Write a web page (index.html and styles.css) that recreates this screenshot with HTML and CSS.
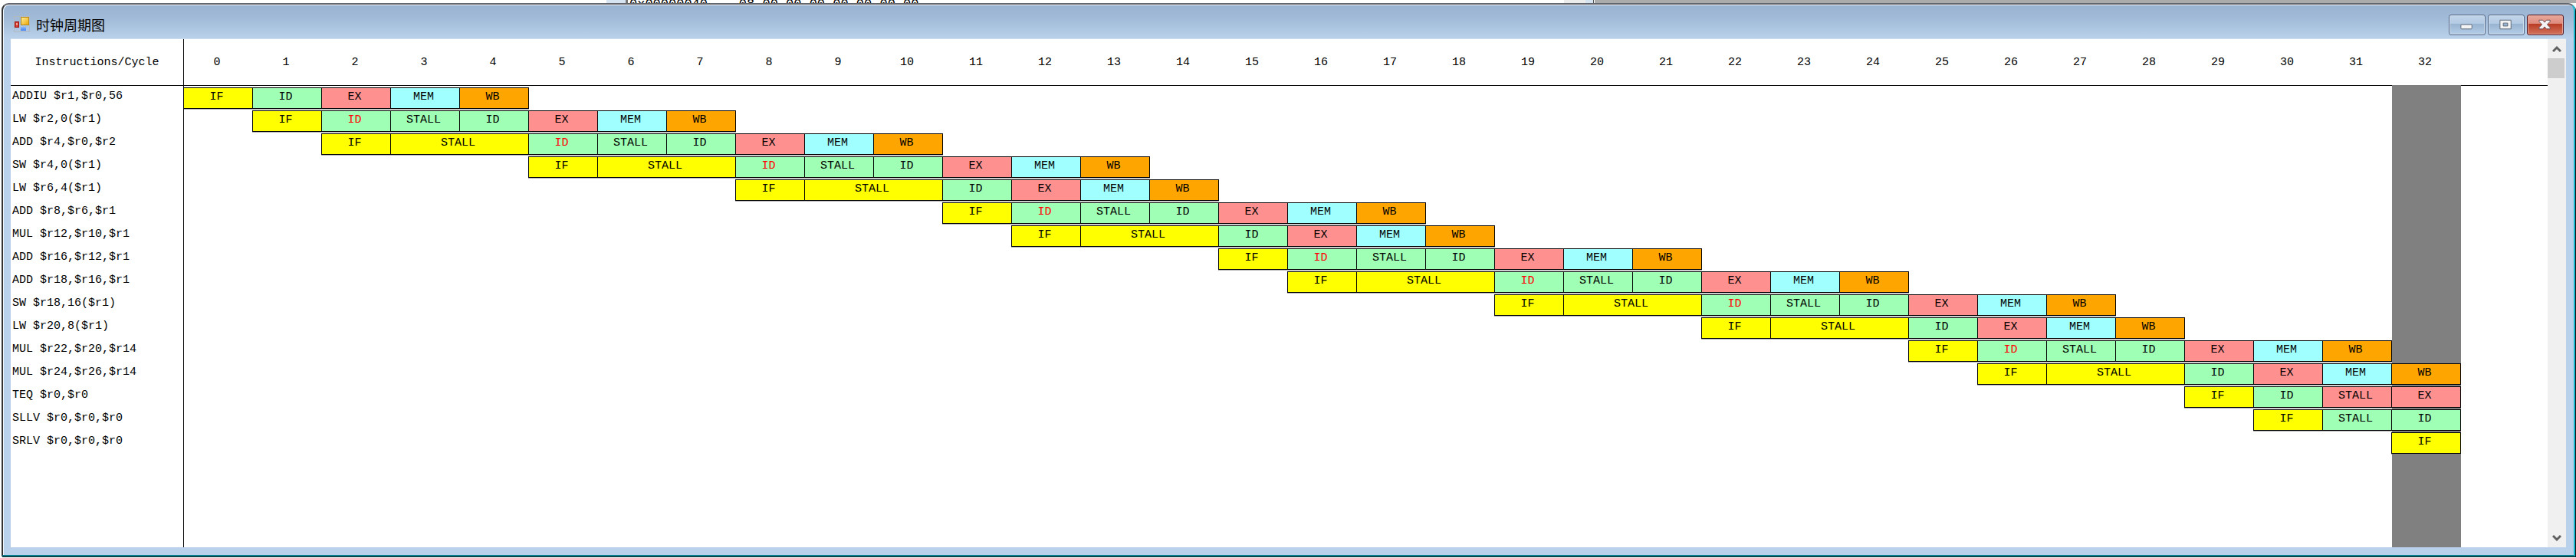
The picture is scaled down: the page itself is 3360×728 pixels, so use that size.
FILE: index.html
```html
<!DOCTYPE html>
<html lang="zh-CN">
<head>
<meta charset="utf-8">
<title>时钟周期图</title>
<link rel="stylesheet" href="styles.css">
</head>
<body>
<div class="backdrop" aria-hidden="true">
  <div class="memory"><span class="gutter"></span><span class="dump">0x00000040&nbsp;&nbsp;&nbsp;&nbsp;08 00 00 00 00 00 00 00</span><span class="memory-bar"></span></div>
</div>
<main class="window">
  <header class="titlebar">
    <svg class="app-icon" viewBox="0 0 22 22" aria-hidden="true">
      <defs>
        <linearGradient id="gold" x1="0" y1="0" x2="1" y2="1"><stop offset="0" stop-color="#fff0a0"/><stop offset="1" stop-color="#eda500"/></linearGradient>
        <linearGradient id="blue" x1="0" y1="0" x2="0" y2="1"><stop offset="0" stop-color="#8db9ff"/><stop offset="1" stop-color="#3f7ff0"/></linearGradient>
      </defs>
      <rect x=".5" y=".5" width="20" height="20" fill="none" stroke="#b3b9c1"/>
      <rect x="9.5" y="1.500" width="10" height="10" fill="url(#gold)" stroke="#b98a16"/>
      <rect x="1.500" y="7.500" width="5" height="7" fill="#cf3a2c" stroke="#9c1410"/>
      <rect x="3" y="9" width="2" height="3" fill="#f0a090"/>
      <rect x="9" y="14" width="7" height="5" fill="url(#blue)"/>
    </svg>
    <h1 class="title">时钟周期图</h1>
    <div class="controls">
      <button class="control" type="button" aria-label="最小化"><svg viewBox="0 0 48 26"><rect x="15.500" y="12.500" width="15" height="6" rx="1" fill="#f4f4f4" stroke="#5b6678"/></svg></button>
      <button class="control" type="button" aria-label="最大化"><svg viewBox="0 0 48 26"><path d="M15.500 6.500h15v12h-15zM20 10.500v4h6v-4z" fill="#f4f4f4" fill-rule="evenodd" stroke="#5b6678"/></svg></button>
      <button class="control close" type="button" aria-label="关闭"><svg viewBox="0 0 48 26"><path d="M15.500 6.500h5l2.500 3 2.500-3h5v2l-4 4 4 4v2h-5l-2.500-3-2.500 3h-5v-2l4-4-4-4z" fill="#f4f4f4" stroke="#6a4b52"/></svg></button>
    </div>
  </header>
  <div class="client">
    <table class="chart">
      <colgroup><col class="names"><col class="cycle" span="33"><col></colgroup>
      <thead>
        <tr><th class="corner" scope="col">Instructions/Cycle</th><th scope="col">0</th><th scope="col">1</th><th scope="col">2</th><th scope="col">3</th><th scope="col">4</th><th scope="col">5</th><th scope="col">6</th><th scope="col">7</th><th scope="col">8</th><th scope="col">9</th><th scope="col">10</th><th scope="col">11</th><th scope="col">12</th><th scope="col">13</th><th scope="col">14</th><th scope="col">15</th><th scope="col">16</th><th scope="col">17</th><th scope="col">18</th><th scope="col">19</th><th scope="col">20</th><th scope="col">21</th><th scope="col">22</th><th scope="col">23</th><th scope="col">24</th><th scope="col">25</th><th scope="col">26</th><th scope="col">27</th><th scope="col">28</th><th scope="col">29</th><th scope="col">30</th><th scope="col">31</th><th class="current-head" scope="col">32</th><th></th></tr>
      </thead>
      <tbody>
        <tr><th scope="row">ADDIU $r1,$r0,56</th><td><b class="if">IF</b></td><td><b class="id">ID</b></td><td><b class="ex">EX</b></td><td><b class="mem">MEM</b></td><td><b class="wb">WB</b></td><td colspan="27"></td><td class="now"></td><td></td></tr>
        <tr><th scope="row">LW $r2,0($r1)</th><td></td><td><b class="if">IF</b></td><td><b class="id hazard">ID</b></td><td><b class="id">STALL</b></td><td><b class="id">ID</b></td><td><b class="ex">EX</b></td><td><b class="mem">MEM</b></td><td><b class="wb">WB</b></td><td colspan="24"></td><td class="now"></td><td></td></tr>
        <tr><th scope="row">ADD $r4,$r0,$r2</th><td colspan="2"></td><td><b class="if">IF</b></td><td colspan="2"><b class="if">STALL</b></td><td><b class="id hazard">ID</b></td><td><b class="id">STALL</b></td><td><b class="id">ID</b></td><td><b class="ex">EX</b></td><td><b class="mem">MEM</b></td><td><b class="wb">WB</b></td><td colspan="21"></td><td class="now"></td><td></td></tr>
        <tr><th scope="row">SW $r4,0($r1)</th><td colspan="5"></td><td><b class="if">IF</b></td><td colspan="2"><b class="if">STALL</b></td><td><b class="id hazard">ID</b></td><td><b class="id">STALL</b></td><td><b class="id">ID</b></td><td><b class="ex">EX</b></td><td><b class="mem">MEM</b></td><td><b class="wb">WB</b></td><td colspan="18"></td><td class="now"></td><td></td></tr>
        <tr><th scope="row">LW $r6,4($r1)</th><td colspan="8"></td><td><b class="if">IF</b></td><td colspan="2"><b class="if">STALL</b></td><td><b class="id">ID</b></td><td><b class="ex">EX</b></td><td><b class="mem">MEM</b></td><td><b class="wb">WB</b></td><td colspan="17"></td><td class="now"></td><td></td></tr>
        <tr><th scope="row">ADD $r8,$r6,$r1</th><td colspan="11"></td><td><b class="if">IF</b></td><td><b class="id hazard">ID</b></td><td><b class="id">STALL</b></td><td><b class="id">ID</b></td><td><b class="ex">EX</b></td><td><b class="mem">MEM</b></td><td><b class="wb">WB</b></td><td colspan="14"></td><td class="now"></td><td></td></tr>
        <tr><th scope="row">MUL $r12,$r10,$r1</th><td colspan="12"></td><td><b class="if">IF</b></td><td colspan="2"><b class="if">STALL</b></td><td><b class="id">ID</b></td><td><b class="ex">EX</b></td><td><b class="mem">MEM</b></td><td><b class="wb">WB</b></td><td colspan="13"></td><td class="now"></td><td></td></tr>
        <tr><th scope="row">ADD $r16,$r12,$r1</th><td colspan="15"></td><td><b class="if">IF</b></td><td><b class="id hazard">ID</b></td><td><b class="id">STALL</b></td><td><b class="id">ID</b></td><td><b class="ex">EX</b></td><td><b class="mem">MEM</b></td><td><b class="wb">WB</b></td><td colspan="10"></td><td class="now"></td><td></td></tr>
        <tr><th scope="row">ADD $r18,$r16,$r1</th><td colspan="16"></td><td><b class="if">IF</b></td><td colspan="2"><b class="if">STALL</b></td><td><b class="id hazard">ID</b></td><td><b class="id">STALL</b></td><td><b class="id">ID</b></td><td><b class="ex">EX</b></td><td><b class="mem">MEM</b></td><td><b class="wb">WB</b></td><td colspan="7"></td><td class="now"></td><td></td></tr>
        <tr><th scope="row">SW $r18,16($r1)</th><td colspan="19"></td><td><b class="if">IF</b></td><td colspan="2"><b class="if">STALL</b></td><td><b class="id hazard">ID</b></td><td><b class="id">STALL</b></td><td><b class="id">ID</b></td><td><b class="ex">EX</b></td><td><b class="mem">MEM</b></td><td><b class="wb">WB</b></td><td colspan="4"></td><td class="now"></td><td></td></tr>
        <tr><th scope="row">LW $r20,8($r1)</th><td colspan="22"></td><td><b class="if">IF</b></td><td colspan="2"><b class="if">STALL</b></td><td><b class="id">ID</b></td><td><b class="ex">EX</b></td><td><b class="mem">MEM</b></td><td><b class="wb">WB</b></td><td colspan="3"></td><td class="now"></td><td></td></tr>
        <tr><th scope="row">MUL $r22,$r20,$r14</th><td colspan="25"></td><td><b class="if">IF</b></td><td><b class="id hazard">ID</b></td><td><b class="id">STALL</b></td><td><b class="id">ID</b></td><td><b class="ex">EX</b></td><td><b class="mem">MEM</b></td><td><b class="wb">WB</b></td><td class="now"></td><td></td></tr>
        <tr><th scope="row">MUL $r24,$r26,$r14</th><td colspan="26"></td><td><b class="if">IF</b></td><td colspan="2"><b class="if">STALL</b></td><td><b class="id">ID</b></td><td><b class="ex">EX</b></td><td><b class="mem">MEM</b></td><td class="now"><b class="wb">WB</b></td><td></td></tr>
        <tr><th scope="row">TEQ $r0,$r0</th><td colspan="29"></td><td><b class="if">IF</b></td><td><b class="id">ID</b></td><td><b class="ex">STALL</b></td><td class="now"><b class="ex">EX</b></td><td></td></tr>
        <tr><th scope="row">SLLV $r0,$r0,$r0</th><td colspan="30"></td><td><b class="if">IF</b></td><td><b class="id">STALL</b></td><td class="now"><b class="id">ID</b></td><td></td></tr>
        <tr><th scope="row">SRLV $r0,$r0,$r0</th><td colspan="32"></td><td class="now"><b class="if">IF</b></td><td></td></tr>
        <tr class="rest"><th></th><td colspan="32"></td><td class="now"></td><td></td></tr>
      </tbody>
    </table>
    <div class="scrollbar">
      <button class="arrow" type="button" aria-label="向上滚动"><svg viewBox="0 0 12 10"><path d="M1 8l5-5 5 5" fill="none" stroke="#606060" stroke-width="3"/></svg></button>
      <div class="thumb"></div>
      <button class="arrow down" type="button" aria-label="向下滚动"><svg viewBox="0 0 12 10"><path d="M1 2l5 5 5-5" fill="none" stroke="#606060" stroke-width="3"/></svg></button>
    </div>
  </div>
</main>
</body>
</html>
```

FILE: styles.css
```css
* { box-sizing: border-box; }

body {
  margin: 0;
  height: 100vh;
  display: flex;
  flex-direction: column;
  overflow: hidden;
  background: #fff;
  font-family: "Liberation Mono", "Noto Sans CJK SC", monospace;
  font-size: 15px;
  color: #000;
}

/* Strip of the program behind the window */
.backdrop {
  flex: none;
  height: 4px;
  display: flex;
  overflow: hidden;
  background: linear-gradient(90deg, #fff 61.9%, #ababab 61.9%);
}
.memory {
  display: flex;
  width: 1288px;
  margin-left: 791px;
  border-right: 1px solid #555;
}
.gutter {
  width: 28px;
  background: #d6e4f2;
  border-right: 3px solid #777;
}
.dump {
  flex: 1;
  padding-left: 2px;
  font-size: 17px;
  line-height: 12px;
  white-space: nowrap;
}
.memory-bar {
  width: 38px;
  background: #ececec;
  border-right: 10px solid #d6e4f2;
}

.window {
  flex: 1;
  min-height: 0;
  display: flex;
  flex-direction: column;
  margin: 0 1px 2px 2px;
  padding: 0 10px 10px 10px;
  border: 2px solid #333;
  border-top-color: #65656c;
  border-right: 2px solid #16b8ce;
  border-bottom: 2px solid #087d8c;
  border-radius: 9px 9px 0 0;
  box-shadow: inset 1px 1px #f2f6fa, 1px 1px #111;
  background: linear-gradient(#98b3d2, #a1bad7 18px, #b9d1ea 44px, #b9d1ea);
}

.titlebar {
  flex: none;
  height: 45px;
  display: flex;
  align-items: center;
  padding: 8px 3px 0 4px;
  border-bottom: 1px solid #cadcec;
}
.app-icon { width: 22px; height: 22px; }
.title {
  flex: 1;
  margin: 0 0 0 7px;
  font: 400 18px/24px "Noto Sans CJK SC", sans-serif;
}
.controls {
  display: flex;
  gap: 3px;
}
.control {
  width: 48px;
  height: 27px;
  padding: 0;
  border: 1px solid #56688a;
  border-radius: 3px;
  background: linear-gradient(#c2d5ea, #b3cae3 45%, #98b3d0 45%, #b5cee8);
  box-shadow: inset 0 0 0 1px #cfdeed;
}
.control svg {
  display: block;
  width: 100%;
  height: 100%;
}
.close {
  border-color: #551a26;
  background: linear-gradient(#e9a99d, #dd8a7b 45%, #b93c24 45%, #d3735c);
  box-shadow: inset 0 0 0 1px #e5a799;
}

.client {
  flex: 1;
  min-height: 0;
  display: flex;
  background: #fff;
}
.chart {
  flex: 1;
  width: 100%;
  height: 100%;
  table-layout: fixed;
  border-collapse: separate;
  border-spacing: 0;
}
.names { width: 226px; }
.cycle { width: 90px; }
th, td {
  height: 30px;
  padding: 0;
  font-weight: 400;
  line-height: 20px;
  text-align: center;
}
th { white-space: nowrap; }
thead th {
  height: 61px;
  padding: 2px 4px 0 0;
  border-bottom: 1px solid #000;
}
thead th.corner {
  padding-left: 4px;
}
thead .current-head { border-bottom-color: #808080; }
tr > :first-child { border-right: 1px solid #000; }
tbody th {
  padding: 0 0 3px 2px;
  text-align: left;
}
.now { background: #808080; }
tbody td {
  padding-top: 2px;
  vertical-align: top;
}
tbody b {
  display: block;
  height: 28px;
  margin: 0 0 0 -1px;
  padding: 2px 4px 0 0;
  border: 1px solid #000;
  box-shadow: 0 1px #b0b0b0;
  font-weight: 400;
}
.if { background: #ff0; }
.id { background: #9fffb4; }
.ex { background: #ff9090; }
.mem { background: #a0ffff; }
.wb { background: #ffa500; }
.hazard { color: #f00; }
.rest > * { height: auto; }

.scrollbar {
  flex: none;
  width: 24px;
  display: flex;
  flex-direction: column;
  background: #f0f0f0;
}
.arrow {
  height: 25px;
  padding: 0;
  border: 0;
  background: transparent;
}
.arrow svg {
  display: block;
  width: 12px;
  height: 10px;
  margin: 0 auto;
}
.thumb {
  height: 26px;
  margin-right: 2px;
  background: #cdcdcd;
}
.down { margin-top: auto; }
```
